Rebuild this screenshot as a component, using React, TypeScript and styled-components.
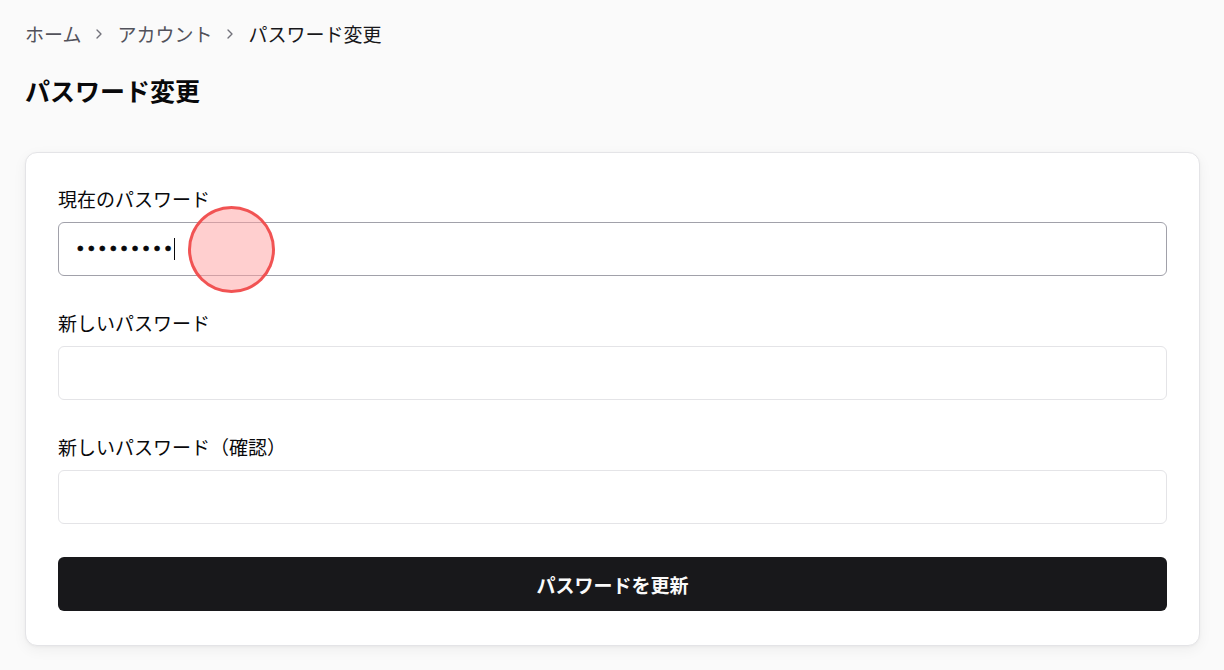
import React from "react";
import styled, { createGlobalStyle } from "styled-components";
import { ChevronRight } from "lucide-react";

const GlobalStyle = createGlobalStyle`
  html, body {
    margin: 0;
    padding: 0;
    background: #fafafa;
  }
  body {
    font-family: "Noto Sans CJK JP", "Noto Sans", sans-serif;
    color: #18181b;
  }
  * { box-sizing: border-box; }
`;

const Page = styled.div`
  position: relative;
  min-height: 670px;
  padding: 20px 24px 24px 25px;
`;

const Breadcrumb = styled.nav`
  display: flex;
  align-items: center;
  gap: 10px;
  font-size: 19px;
  line-height: 28px;
`;

const Crumb = styled.span<{ $current?: boolean }>`
  color: ${(p) => (p.$current ? "#18181b" : "#52525b")};
`;

const Sep = styled.span`
  display: flex;
  align-items: center;
  color: #71717a;
`;

const Title = styled.h1`
  margin: 24px 0 0;
  font-size: 25px;
  line-height: 36px;
  font-weight: 700;
  color: #09090b;
`;

const Card = styled.section`
  margin-top: 44px;
  background: #ffffff;
  border: 1px solid #e4e4e7;
  border-radius: 12px;
  box-shadow: 0 4px 14px rgba(0, 0, 0, 0.05), 0 1px 3px rgba(0, 0, 0, 0.04);
  padding: 32px 32px 34px;
  display: flex;
  flex-direction: column;
  gap: 33px;
`;

const Field = styled.div`
  display: flex;
  flex-direction: column;
  gap: 9px;
`;

const Label = styled.label`
  font-size: 19px;
  line-height: 28px;
  color: #09090b;
`;

const Input = styled.div<{ $focused?: boolean }>`
  height: 54px;
  border: 1px solid ${(p) => (p.$focused ? "#a1a1aa" : "#e4e4e7")};
  border-radius: 6px;
  background: #fff;
  display: flex;
  align-items: center;
  padding: 0 16px;
`;

const Dots = styled.span`
  font-family: "DejaVu Sans", sans-serif;
  font-size: 18px;
  letter-spacing: 0.35px;
  color: #09090b;
  line-height: 1;
  -webkit-text-stroke: 0.4px #09090b;
`;

const Caret = styled.span`
  display: inline-block;
  width: 1px;
  height: 22px;
  background: #09090b;
`;

const Button = styled.button`
  height: 54px;
  border: none;
  border-radius: 6px;
  background: #18181b;
  color: #fafafa;
  font-family: "Noto Sans CJK JP", sans-serif;
  font-size: 19px;
  font-weight: 700;
  cursor: pointer;
`;

const Touch = styled.div`
  position: absolute;
  left: 188px;
  top: 206px;
  width: 87px;
  height: 87px;
  border-radius: 50%;
  background: rgba(255, 160, 160, 0.5);
  border: 3px solid rgba(240, 70, 70, 0.9);
  pointer-events: none;
`;

export default function App() {
  return (
    <>
      <GlobalStyle />
      <Page>
        <Breadcrumb>
          <Crumb>ホーム</Crumb>
          <Sep><ChevronRight size={16} strokeWidth={2} /></Sep>
          <Crumb>アカウント</Crumb>
          <Sep><ChevronRight size={16} strokeWidth={2} /></Sep>
          <Crumb $current>パスワード変更</Crumb>
        </Breadcrumb>
        <Title>パスワード変更</Title>
        <Card>
          <Field>
            <Label>現在のパスワード</Label>
            <Input $focused>
              <Dots>•••••••••</Dots>
              <Caret />
            </Input>
          </Field>
          <Field>
            <Label>新しいパスワード</Label>
            <Input />
          </Field>
          <Field>
            <Label>新しいパスワード（確認）</Label>
            <Input />
          </Field>
          <Button>パスワードを更新</Button>
        </Card>
        <Touch />
      </Page>
    </>
  );
}
